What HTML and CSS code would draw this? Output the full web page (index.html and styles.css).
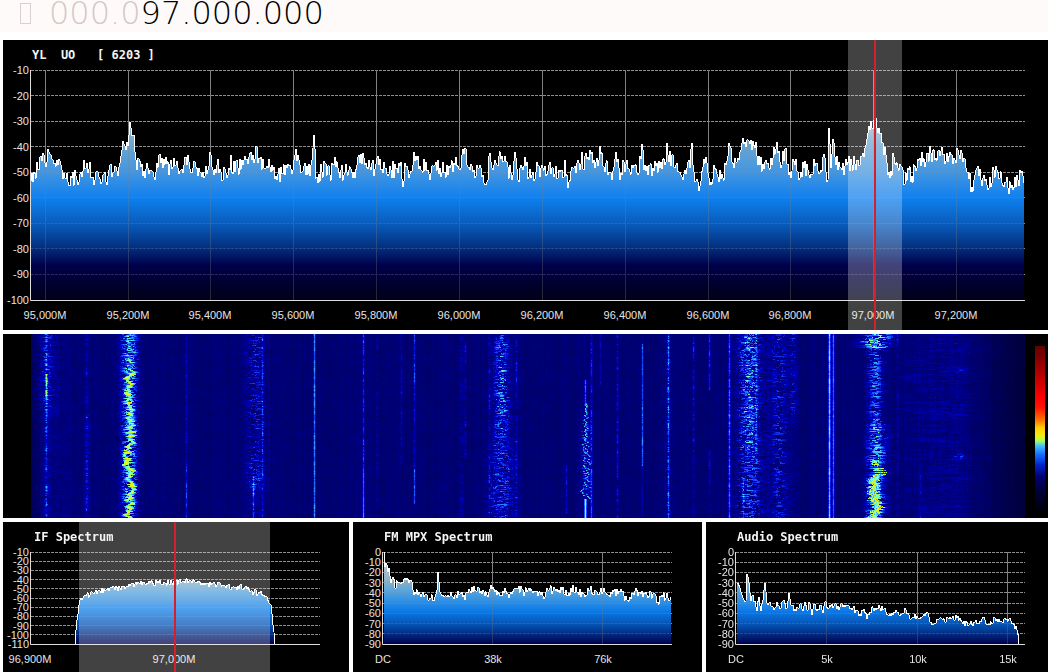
FILE: index.html
```html
<!DOCTYPE html>
<html lang="en">
<head>
<meta charset="utf-8">
<meta name="viewport" content="width=device-width, initial-scale=1">
<title>FM Receiver</title>
<link rel="stylesheet" href="styles.css">
</head>
<body>
<header class="tuner">
  <button class="mute" type="button" aria-label="Mute"></button>
  <output class="frequency"><span class="leading">000.0</span>97.000.000</output>
</header>
<main class="receiver">
  <section class="panel">
    <svg class="chart chart-tall" id="rf"></svg>
    <h2 class="panel-title">YL  UO   [ 6203 ]</h2>
  </section>
  <section class="waterfall" aria-label="Waterfall">
    <canvas class="history" id="waterfall" width="994" height="184"></canvas>
    <div class="scale"></div>
  </section>
  <div class="details">
    <section class="panel">
      <svg class="chart" id="if"></svg>
      <h2 class="panel-title">IF Spectrum</h2>
    </section>
    <section class="panel">
      <svg class="chart" id="mpx"></svg>
      <h2 class="panel-title">FM MPX Spectrum</h2>
    </section>
    <section class="panel">
      <svg class="chart" id="audio"></svg>
      <h2 class="panel-title">Audio Spectrum</h2>
    </section>
  </div>
</main>
<script src="app.js"></script>
</body>
</html>
```
FILE: styles.css
```css
* { box-sizing: border-box; }
body {
  margin: 0;
  background: #fff;
  font-family: "Liberation Sans", Arial, sans-serif;
}
.tuner {
  display: flex;
  align-items: center;
  gap: 18px;
  height: 32px;
  padding: 0 20px 6px;
  background: #fffafa;
}
.mute {
  width: 11px;
  height: 21px;
  padding: 0;
  border: 1px solid #dccfcf;
  background: transparent;
}
.frequency {
  font-family: "DejaVu Sans", sans-serif;
  font-size: 32px;
  font-weight: 200;
  line-height: 32px;
  color: #000;
}
.leading { color: #d5c8c8; }
.receiver {
  display: grid;
  gap: 4px;
  padding: 8px 0 0 3px;
}
.panel {
  display: grid;
  min-width: 0;
  background: #000;
}
.chart, .panel-title { grid-area: 1 / 1; }
.chart {
  display: block;
  width: 100%;
  height: 150px;
}
.chart-tall { height: 290px; }
.panel-title {
  z-index: 1;
  margin: 0;
  padding: 7px 0 0 29px;
  font-family: "DejaVu Sans Mono", monospace;
  font-size: 12px;
  font-weight: 700;
  line-height: 16px;
  white-space: pre;
  color: #f4f4f4;
}
.details {
  display: grid;
  grid-template-columns: 346fr 349fr 342fr;
  gap: 4px;
}
.details .panel-title { padding-left: 31px; }
.label {
  font-size: 11px;
  fill: #e4e4e4;
}
.label-x { text-anchor: middle; }
.label-y { text-anchor: end; }
.rule {
  stroke: #8c8c8c;
  stroke-dasharray: 3 1;
}
.tick { stroke: #808080; }
.axis { fill: none; stroke: #dcdcdc; }
.veil { opacity: .3; }
.trace {
  fill: none;
  stroke: #fff;
  stroke-width: 1;
  shape-rendering: crispEdges;
}
.band { fill: #fff; fill-opacity: .26; }
.cursor { stroke: #d3202c; stroke-width: 2; }
.waterfall {
  display: flex;
  height: 184px;
  padding: 0 3px 0 28px;
  background: #000;
}
.history {
  flex: 1;
  min-width: 0;
  height: 184px;
}
.scale {
  width: 10px;
  margin: 12px 0 8px 10px;
  background: linear-gradient(#600000, #900000 10%, #ff0000 32%, #ff1800 38%, #ff7000 45%, #ffd000 50%, #f0f010 55%, #a0ff60 58%, #40c0ff 61%, #1870ff 66%, #0020c8 73%, #000070 80%, #000030 90%, #000010);
}
```
FILE: app.js
```js
const SVG_NS = 'http://www.w3.org/2000/svg';

function makeRandom(seed) {
  let s = seed;
  return () => {
    s = (s * 1664525 + 1013904223) >>> 0;
    return s / 4294967296;
  };
}

function add(parent, tag, attrs, text) {
  const el = document.createElementNS(SVG_NS, tag);
  for (const key in attrs) el.setAttribute(key, attrs[key]);
  if (text) el.textContent = text;
  parent.appendChild(el);
  return el;
}

// Each trace is a flat list of alternating bin and level values.
const charts = {
  rf: {
    left: 28, right: 23, top: 30, bottom: 30, from: -10, to: -100,
    bins: [31, 1025], levels: [70, 300], noise: 9, seed: 7, step: 1,
    ticks: [[46, '95,000M'], [129, '95,200M'], [211, '95,400M'], [294, '95,600M'], [377, '95,800M'], [460, '96,000M'], [543, '96,200M'], [626, '96,400M'], [709, '96,600M'], [791, '96,800M'], [874, '97,000M'], [957, '97,200M']],
    labelShift: -1, grid: true, labelGap: 19,
    stops: [[0.2, '#b8c4c4'], [0.32, '#6ca6cf'], [0.44, '#4596e0'], [0.557, '#0f80ee'], [0.674, '#085ab8'], [0.77, '#033080'], [0.85, '#00004a'], [1, '#000018']],
    band: [848, 902], cursor: 875,
    trace: [31,181,34,172,38,170,40,157,42,161,45,163,48,149,50,154,53,160,55,163,57,160,60,161,62,170,65,178,68,182,72,178,76,176,78,185,82,177,84,160,86,168,88,173,90,162,92,178,94,185,96,172,99,177,102,182,104,174,106,182,109,170,111,164,113,173,117,171,120,163,122,150,124,144,126,150,128,146,129,135,131,128,133,136,134,135,136,160,137,170,139,159,142,164,145,178,147,163,150,170,153,172,156,172,159,155,161,163,164,159,167,164,169,175,171,160,173,167,174,158,176,165,180,171,183,173,186,157,189,162,192,173,195,162,198,176,203,172,208,170,211,155,213,170,217,165,221,172,226,173,229,168,231,155,233,174,236,161,238,168,242,160,245,156,248,164,252,160,254,163,256,146,258,163,261,157,264,168,270,167,276,176,282,174,288,164,292,174,294,160,298,155,302,172,307,166,310,176,312,160,314,135,316,178,322,172,325,163,330,175,334,165,338,168,344,175,349,170,354,172,357,165,360,163,363,153,366,163,370,167,375,169,377,158,380,159,383,173,386,168,391,170,396,169,401,162,403,187,405,163,409,178,412,171,414,152,417,160,421,170,426,162,430,180,434,166,440,168,445,172,450,168,455,165,460,170,462,155,465,148,467,165,473,172,478,168,483,175,487,182,490,153,493,170,496,163,499,156,503,162,508,167,512,180,515,152,519,182,521,165,526,166,531,178,536,172,541,168,546,176,550,162,554,177,559,170,563,178,565,160,568,188,571,171,577,163,580,170,582,152,584,170,586,153,589,160,592,152,595,168,598,166,600,146,603,166,606,163,609,172,612,180,616,152,620,180,624,162,630,172,635,166,639,173,642,144,644,170,648,175,653,168,657,163,660,168,665,165,667,143,669,162,672,155,676,165,680,172,685,170,690,168,692,143,694,172,698,182,700,186,703,167,707,163,711,182,714,165,718,177,723,178,726,165,729,143,732,162,735,158,739,160,742,143,746,147,750,144,755,148,756,142,758,165,763,164,768,163,773,158,777,142,781,168,785,149,789,175,795,165,798,172,804,168,811,174,816,163,820,173,825,158,828,180,829,128,831,168,833,139,836,165,839,162,842,170,847,165,852,165,857,160,862,156,866,145,870,130,874,120,878,133,882,143,886,155,890,178,894,157,898,168,902,167,904,185,908,168,912,176,917,168,920,158,926,162,931,153,936,158,943,155,948,162,954,158,959,155,963,162,967,172,972,187,976,170,983,178,989,188,996,166,1000,178,1006,182,1011,188,1018,180,1022,171,1024,183]
  },
  if: {
    left: 28, right: 29, top: 30, bottom: 28, from: -10, to: -110,
    bins: [31, 320], levels: [552, 644], noise: 3, seed: 5, step: 1,
    ticks: [[31, '96,900M'], [175, '97,000M']], labelShift: -1, grid: false, labelGap: 19,
    band: [79, 270], cursor: 175,
    trace: [75,644,77,620,79,605,81,598,85,596,90,595,95,592,100,591,110,588,120,588,130,586,140,584,150,583,165,583,184,581,195,582,205,585,215,584,225,586,235,588,245,587,250,592,260,593,267,597,271,605,273,625,275,644]
  },
  mpx: {
    left: 30, right: 30, top: 30, bottom: 28, from: 0, to: -90,
    bins: [383, 672], levels: [552, 644], noise: 5, seed: 14, step: 1,
    ticks: [[383, 'DC'], [493, '38k'], [603, '76k']], labelShift: 0, grid: true, labelGap: 19,
    trace: [384,552,385,567,386,563,388,572,389,568,391,583,393,577,395,588,398,583,403,583,407,580,409,583,410,580,413,590,418,595,422,594,430,598,435,597,437,590,438,572,440,592,445,596,452,596,460,594,463,597,470,591,476,591,482,594,487,595,493,587,497,595,503,591,508,594,509,598,511,592,517,589,525,592,530,591,537,591,543,596,548,590,555,589,562,590,568,596,571,588,577,592,583,594,590,590,597,592,605,592,612,594,620,592,627,600,633,593,640,592,647,595,655,594,658,602,663,597,671,597]
  },
  audio: {
    left: 30, right: 23, top: 30, bottom: 28, from: 0, to: -90,
    bins: [736, 1025], levels: [552, 644], noise: 3, seed: 23, step: 1,
    ticks: [[736, 'DC'], [827, '5k'], [918, '10k'], [1008, '15k']], labelShift: 0, grid: true, labelGap: 19,
    trace: [737,583,740,588,743,598,746,601,747,574,749,583,751,601,753,595,757,611,759,597,761,611,763,600,765,583,767,603,771,606,775,608,777,602,780,609,783,601,787,608,789,593,791,605,796,611,800,604,803,611,805,602,808,610,809,602,812,615,814,604,817,611,820,605,823,613,825,602,828,609,834,606,840,607,848,605,853,608,860,614,864,609,867,619,870,612,873,608,880,608,884,609,888,615,893,615,897,612,902,614,906,610,911,619,917,616,922,617,924,614,928,613,930,622,936,623,940,618,945,622,950,617,957,618,962,622,970,624,978,623,982,619,992,624,995,618,1002,622,1006,620,1009,619,1012,624,1017,630,1019,644]
  }
};

const detailStops = [[0.1, '#c4cccc'], [0.3, '#8fb4c8'], [0.45, '#4ea0de'], [0.64, '#0c7ae8'], [0.8, '#044fae'], [1, '#00004c']];

function fillTrace(cfg) {
  const random = makeRandom(cfg.seed);
  const points = [];
  const t = cfg.trace;
  let i = 0;
  for (let bin = t[0]; bin <= t[t.length - 2]; bin += cfg.step) {
    while (i < t.length - 4 && bin > t[i + 2]) i += 2;
    const k = (bin - t[i]) / (t[i + 2] - t[i]);
    let level = t[i + 1] + k * (t[i + 3] - t[i + 1]);
    if (k > 0 && k < 1) level += (random() * 2 - 1) * cfg.noise;
    points.push([bin, level]);
  }
  return points;
}

function drawChart(id) {
  const cfg = charts[id];
  const svg = document.getElementById(id);
  svg.replaceChildren();
  const width = svg.clientWidth;
  const height = svg.clientHeight;
  const x0 = cfg.left;
  const x1 = width - cfg.right;
  const y0 = cfg.top;
  const y1 = height - cfg.bottom;
  const toX = bin => x0 + (bin - cfg.bins[0]) / (cfg.bins[1] - cfg.bins[0]) * (x1 - x0);
  const toY = level => y0 + (level - cfg.levels[0]) / (cfg.levels[1] - cfg.levels[0]) * (y1 - y0);
  const crisp = v => Math.floor(v) + 0.5;

  const gradient = add(add(svg, 'defs', {}), 'linearGradient', { id: id + '-fill', gradientUnits: 'userSpaceOnUse', x1: 0, x2: 0, y1: y0, y2: y1 });
  for (const [offset, color] of cfg.stops || detailStops) {
    add(gradient, 'stop', { offset, 'stop-color': color });
  }

  const drawGrid = parent => {
    for (let db = cfg.from; db > cfg.to; db -= 10) {
      const y = crisp(y0 + (cfg.from - db) / (cfg.from - cfg.to) * (y1 - y0));
      add(parent, 'line', { class: 'rule', x1: x0, x2: x1, y1: y, y2: y });
    }
    if (!cfg.grid) return;
    for (const [bin] of cfg.ticks) {
      const x = crisp(toX(bin) - 0.3);
      add(parent, 'line', { class: 'tick', x1: x, x2: x, y1: y0, y2: y1 });
    }
  };
  drawGrid(add(svg, 'g', {}));

  const points = fillTrace(cfg).map(([bin, level]) => [toX(bin).toFixed(1), toY(level).toFixed(1)]);
  const line = points.map(p => p.join(' ')).join('L');
  add(svg, 'path', { d: `M${points[0][0]} ${y1}L${line}L${points[points.length - 1][0]} ${y1}Z`, fill: `url(#${id}-fill)` });
  drawGrid(add(svg, 'g', { class: 'veil' }));
  add(svg, 'path', { class: 'trace', d: 'M' + line });
  add(svg, 'path', { class: 'axis', d: `M${x0 - 0.5} ${y0}V${y1 + 0.5}H${x1}` });

  for (let db = cfg.from; db >= cfg.to; db -= 10) {
    const y = y0 + (cfg.from - db) / (cfg.from - cfg.to) * (y1 - y0);
    add(svg, 'text', { class: 'label label-y', x: x0 - 2, y: Math.round(y) + 4 }, String(db));
  }
  for (const [bin, text] of cfg.ticks) {
    add(svg, 'text', { class: 'label label-x', x: toX(bin) + cfg.labelShift, y: y1 + cfg.labelGap }, text);
  }
  if (cfg.band) {
    const left = toX(cfg.band[0]);
    add(svg, 'rect', { class: 'band', x: left, y: 0, width: toX(cfg.band[1]) - left, height });
    const x = Math.round(toX(cfg.cursor));
    add(svg, 'line', { class: 'cursor', x1: x, x2: x, y1: 0, y2: height });
  }
}

const palette = [[0, 0, 0, 24], [0.15, 0, 0, 70], [0.3, 0, 0, 132], [0.42, 0, 0, 200], [0.55, 24, 80, 255], [0.68, 60, 190, 255], [0.78, 120, 255, 190], [0.88, 200, 250, 50], [1, 255, 240, 0]];

function shade(v) {
  v = Math.max(0, Math.min(1, v));
  let i = 0;
  while (i < palette.length - 2 && v > palette[i + 1][0]) i++;
  const a = palette[i];
  const b = palette[i + 1];
  const k = (v - a[0]) / (b[0] - a[0]);
  return [1, 2, 3].map(n => a[n] + k * (b[n] - a[n]));
}

// Steady carriers: x, half width, strength, first row, last row, flicker
const carriers = [
  [15, 1, .14, 0, 184, .15], [15, 1, .3, 40, 62, .15], [55, 3, .07, 0, 184, .1], [155, 1, .1, 0, 130, .08], [155, 1, .2, 130, 184, .1],
  [222, 1, .22, 142, 184, .1], [231, 1, .13, 0, 184, .12], [283, 1, .34, 0, 184, .07],
  [332, 1, .2, 0, 135, .1], [332, 1, .3, 135, 184, .06], [346, 2, .05, 0, 184, .08], [370, 1, .09, 0, 130, .08],
  [383, 1, .2, 0, 62, .1], [383, 1, .09, 62, 135, .08], [383, 1, .24, 135, 170, .08], [430, 3, .05, 0, 184, .08], [434, 1, .09, 0, 130, .1],
  [458, 1, .08, 0, 184, .1], [485, 1, .08, 0, 184, .12], [535, 1, .13, 132, 180, .1], [554, 1, .26, 46, 72, .1], [554, 1, .6, 165, 184, .04],
  [560, 1, .17, 0, 130, .1], [560, 1, .24, 135, 184, .08], [569, 1, .1, 0, 52, .1], [586, 1, .14, 0, 184, .12],
  [611, 1, .28, 10, 132, .08], [611, 1, .1, 132, 184, .08], [637, 1, .2, 0, 184, .12], [662, 1, .11, 0, 120, .12],
  [662, 2, .05, 120, 184, .06], [678, 1, .2, 0, 56, .08], [678, 1, .15, 116, 150, .08], [678, 1, .06, 150, 184, .08],
  [698, 1, .27, 0, 184, .1], [725, 1, .12, 0, 130, .12], [712, 1, .14, 140, 184, .1], [798, 1, .47, 0, 184, .08], [802, 1, .32, 0, 184, .06],
  [866, 1, .06, 0, 184, .08], [889, 1, .1, 130, 184, .08]
];

// Speckled regions: centre, half width, strength, first row, last row
const clouds = [
  [15, 14, .2, -20, 90], [15, 6, .14, 60, 200], [56, 5, .13, 60, 200], [224, 15, .24, -30, 165], [224, 14, .12, 120, 210],
  [470, 10, .38, -10, 120], [470, 22, .14, -20, 200], [470, 20, .24, 100, 205], [554, 7, .34, 72, 172],
  [718, 22, .32, -60, 240], [718, 12, .26, -60, 130], [748, 15, .25, -60, 240], [762, 6, .22, -30, 95],
  [637, 7, .14, -60, 240], [928, 18, .22, 28, 44], [928, 9, .42, 115, 128], [915, 50, .08, -60, 240], [20, 40, .06, -60, 240]
];

function drawWaterfall() {
  const canvas = document.getElementById('waterfall');
  const ctx = canvas.getContext('2d');
  const w = canvas.width;
  const h = canvas.height;
  const random = makeRandom(42);
  const image = ctx.createImageData(w, h);
  const columns = Array.from({ length: w }, () => (random() - 0.5) * 0.04);
  const flickers = carriers.map(() => 0);
  const haze = new Float32Array(w);
  let drift = 0;
  let wander = 0;
  let spark = 0;
  for (let y = 0; y < h; y++) {
    const row = new Float32Array(w);
    let run = 0;
    for (let x = 0; x < w; x++) {
      const edge = Math.min(1, (x + 20) / 34, (w - x) / 60);
      run = run * 0.75 + (random() - 0.5) * 0.04;
      haze[x] = haze[x] * 0.5 + run * 0.5;
      row[x] = (0.26 + columns[x] + haze[x]) * (0.45 + 0.55 * Math.max(0, edge));
    }
    carriers.forEach(([cx, half, strength, top, end, flicker], n) => {
      if (y < top || y >= end) return;
      flickers[n] = flickers[n] * 0.5 + (random() - 0.5) * flicker * 1.6;
      const level = strength + flickers[n];
      for (let d = -half; d <= half; d++) row[cx + d] += level * (1 - Math.abs(d) / (half + 0.9));
    });
    for (const [cx, half, strength, top, end] of clouds) {
      if (y < top || y >= end) continue;
      const fade = Math.min(1, (y - top) / 20, (end - y) / 20) * (end - top < 20 ? 2 : 1);
      let level = 0;
      for (let d = -half; d <= half; d++) {
        if (random() < 0.45) level = Math.pow(random(), 1.9) * strength * fade;
        row[cx + d] += level * Math.exp(-2.2 * d * d / (half * half)) * 1.15;
      }
    }
    // Hopping narrow carrier at 96.3 MHz
    if (y > 68 && y < 165) {
      spark = spark * 0.4 + (random() - 0.5) * (y > 105 ? 7 : 3);
      const x = Math.round(554 + spark);
      row[x] = 0.55 + random() * 0.2;
      row[x + 1] = Math.max(row[x + 1], 0.45 + random() * 0.2);
    }
    // The station at 95.2 MHz
    const wide = y < 35;
    drift = drift * 0.75 + (random() - 0.5) * (wide ? 6 : 5);
    let glow = 0;
    for (let d = -14; d <= 14; d++) {
      if (random() < 0.45) glow = Math.pow(random(), 1.2);
      row[98 + d] += glow * 0.58 * Math.exp(-2.2 * d * d / 150);
    }
    const core = (wide ? 0.5 : 0.75) + random() * 0.3;
    const reach = 1 + Math.floor(random() * (wide ? 5 : 4));
    for (let d = -reach; d <= reach; d++) {
      const x = Math.round(98 + drift + d);
      const level = core - Math.abs(d) * 0.07;
      row[x] = Math.max(row[x], level);
    }
    // The tuned station, strongest near the oldest rows
    wander = wander * 0.7 + (random() - 0.5) * 5;
    const strong = y > 140;
    const spread = y < 14 ? 24 : y < 60 ? 12 : y < 90 ? 11 : 15;
    let beam = 0;
    for (let d = -spread; d <= spread; d++) {
      if (random() < 0.35) beam = random();
      const gain = y < 14 ? 0.6 : strong ? 0.6 : y < 90 ? 0.44 : 0.55;
      row[Math.round(844 + wander * 0.5 + d)] += beam * gain * Math.exp(-2.4 * d * d / (spread * spread));
    }
    if (strong || (y > 125 && random() < 0.35)) {
      const size = 3 + Math.floor(random() * 4);
      for (let d = -size; d <= size; d++) {
        const x = Math.round(844 + wander + d);
        row[x] = Math.max(row[x], 0.65 + random() * 0.38 - Math.abs(d) * 0.02);
      }
    }
    // Short horizontal bursts right of the tuned station
    if (random() < 0.4) {
      const start = 862 + Math.floor(random() * 50);
      const length = 10 + random() * 45;
      for (let d = 0; d < length; d++) row[start + d] += 0.01 + random() * 0.07;
    }
    for (let x = 0; x < w; x++) {
      const [r, g, b] = shade(row[x]);
      const o = (y * w + x) * 4;
      image.data[o] = r;
      image.data[o + 1] = g;
      image.data[o + 2] = b;
      image.data[o + 3] = 255;
    }
  }
  ctx.putImageData(image, 0, 0);
}

function drawAll() {
  Object.keys(charts).forEach(drawChart);
}

drawWaterfall();
drawAll();
window.addEventListener('resize', drawAll);
```
